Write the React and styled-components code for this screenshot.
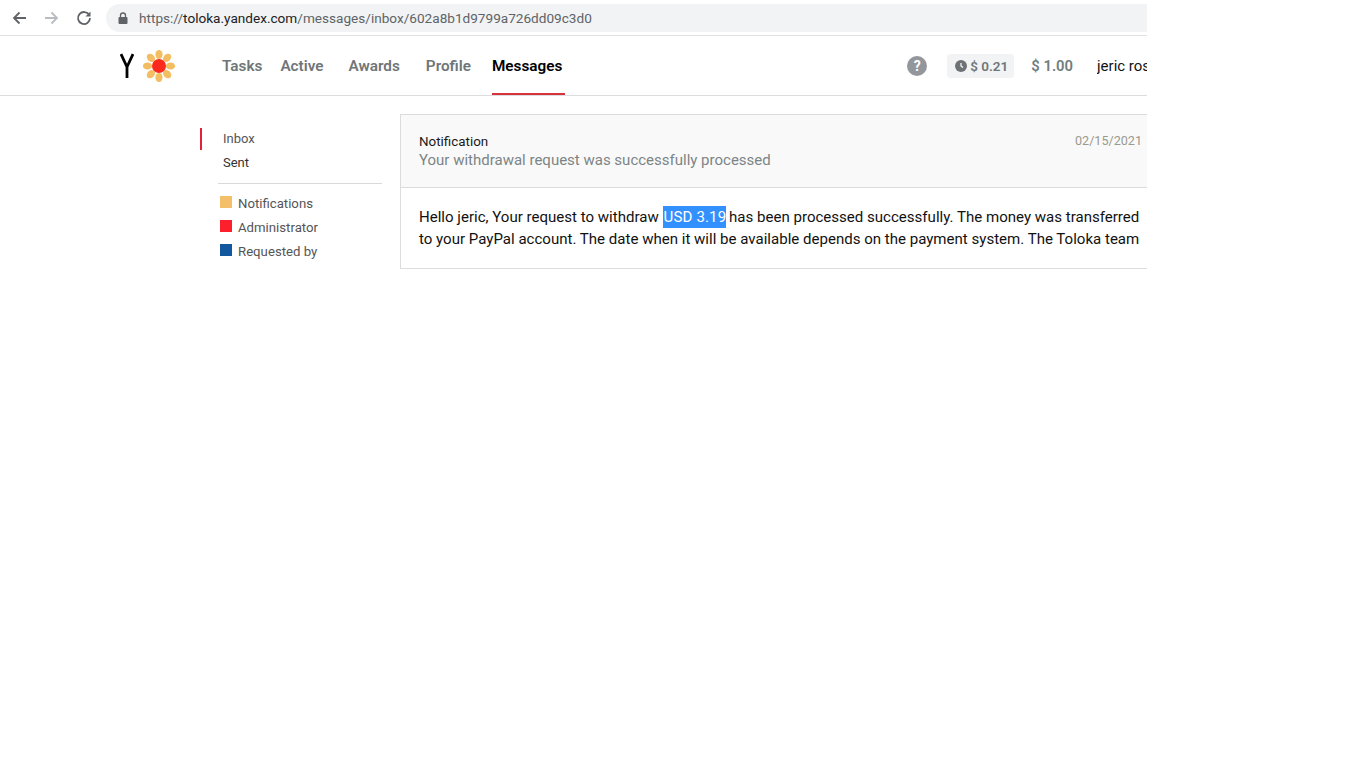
import React from 'react';
import styled, { createGlobalStyle } from 'styled-components';

const GlobalStyle = createGlobalStyle`
  html, body {
    margin: 0;
    padding: 0;
    background: #fff;
    font-family: 'Roboto', 'Liberation Sans', sans-serif;
  }
`;

const Frame = styled.div`
  width: 1147px;
  height: 768px;
  overflow: hidden;
`;

const BrowserBar = styled.div`
  display: flex;
  align-items: center;
  height: 36px;
  padding: 0 0 0 10px;
  box-sizing: border-box;
  border-bottom: 1px solid #dfe1e4;
`;

const ToolButton = styled.button`
  display: flex;
  align-items: center;
  justify-content: center;
  width: 18px;
  height: 18px;
  margin-right: ${(p) => p.$gap}px;
  padding: 0;
  border: none;
  background: none;
`;

const AddressPill = styled.div`
  display: flex;
  align-items: center;
  flex: 1;
  height: 28px;
  padding-left: 12px;
  background: #f1f3f4;
  border-radius: 14px 0 0 14px;
`;

const Url = styled.span`
  margin-left: 11px;
  font-size: 13.6px;
  color: #5f6368;
  white-space: nowrap;

  b {
    font-weight: 400;
    color: #202124;
  }
`;

const Header = styled.header`
  display: flex;
  align-items: stretch;
  height: 60px;
  box-sizing: border-box;
  padding-left: 120px;
  border-bottom: 1px solid #dcdcdc;
`;

const Logo = styled.div`
  display: flex;
  align-items: center;
  gap: 8px;
  width: 102px;
`;

const Nav = styled.nav`
  display: flex;
  align-items: stretch;
`;

const NavItem = styled.a`
  display: flex;
  align-items: center;
  box-sizing: border-box;
  margin-right: ${(p) => p.$gap}px;
  padding-top: 2px;
  padding-right: ${(p) => (p.$active ? '3px' : '0')};
  font-size: 15.3px;
  font-weight: 600;
  color: ${(p) => (p.$active ? '#000' : '#6f7678')};
  border-bottom: 2px solid ${(p) => (p.$active ? '#d8323c' : 'transparent')};
  white-space: nowrap;
`;

const Account = styled.div`
  display: flex;
  align-items: center;
  margin-left: auto;
  padding-top: 1px;
  white-space: nowrap;
`;

const HelpIcon = styled.span`
  display: flex;
  align-items: center;
  justify-content: center;
  width: 20px;
  height: 20px;
  margin-right: 20px;
  border-radius: 50%;
  background: #93969b;
  color: #fff;
  font-size: 14px;
  font-weight: 700;
`;

const PendingBadge = styled.div`
  display: flex;
  align-items: center;
  gap: 3px;
  height: 24px;
  padding: 0 6px 0 8px;
  margin-right: 17px;
  border-radius: 4px;
  background: #f1f3f4;
  font-size: 13.5px;
  font-weight: 600;
  color: #6f7678;
`;

const Balance = styled.span`
  margin-right: 24px;
  font-size: 14.8px;
  font-weight: 600;
  color: #6f7e82;
`;

const UserName = styled.span`
  width: 50px;
  overflow: hidden;
  font-size: 15px;
  color: #111;
`;

const Body = styled.main`
  display: flex;
  align-items: flex-start;
  padding: 18px 0 0 200px;
`;

const Sidebar = styled.aside`
  width: 182px;
  margin-right: 18px;
  padding-top: 14px;
`;

const Folders = styled.div`
  position: relative;
  padding-left: 23px;

  &::before {
    content: '';
    position: absolute;
    left: 0;
    top: 0;
    width: 2px;
    height: 22px;
    background: #e5203a;
  }
`;

const Folder = styled.div`
  height: 24px;
  line-height: 22px;
  font-size: 13px;
  color: ${(p) => (p.$active ? '#555' : '#333')};
`;

const Divider = styled.hr`
  height: 1px;
  margin: 7px 0 7px 18px;
  border: none;
  background: #d9d9d9;
`;

const Tag = styled.div`
  display: flex;
  align-items: center;
  height: 24px;
  margin-left: 20px;
  font-size: 13.2px;
  color: #555;
`;

const TagSwatch = styled.span`
  width: 12px;
  height: 12px;
  margin-right: 6px;
  margin-top: -3px;
  background: ${(p) => p.$color};
`;

const Card = styled.section`
  flex: 1;
  border: 1px solid #dcdcdc;
  border-right: none;
`;

const CardHead = styled.div`
  display: flex;
  justify-content: space-between;
  height: 73px;
  padding: 18px 5px 0 18px;
  box-sizing: border-box;
  background: #f9f9f9;
  border-bottom: 1px solid #dcdcdc;
`;

const Sender = styled.div`
  font-size: 13.4px;
  line-height: 17px;
  color: #1a1a1a;
`;

const Subject = styled.div`
  font-size: 15px;
  line-height: 20px;
  color: #7c8586;
`;

const DateText = styled.div`
  font-size: 12.6px;
  line-height: 16px;
  color: #9a9a8e;
`;

const Message = styled.div`
  height: 80px;
  padding: 18px 0 0 18px;
  box-sizing: border-box;
  font-size: 15.05px;
  line-height: 22px;
  color: #111;
  white-space: nowrap;

  mark {
    display: inline-block;
    margin: 0 -1px 0 1px;
    letter-spacing: 0.15px;
    background: #3390ff;
    color: #fff;
  }
`;

const YLetter = () => (
  <svg width="14" height="26" viewBox="0 0 14 26">
    <path d="M1 1 7 14v11M13 1 7 14" fill="none" stroke="#000" strokeWidth="2.800" />
  </svg>
);

const Flower = () => (
  <svg width="34" height="34" viewBox="0 0 34 34">
    {[0, 45, 90, 135, 180, 225, 270, 315].map((a) => (
      <ellipse key={a} cx="17" cy="5.500" rx="3.600" ry="4.600" fill="#f3bd62" transform={`rotate(${a} 17 17)`} />
    ))}
    <circle cx="17" cy="17" r="7" fill="#fc2a1d" />
  </svg>
);

const App = () => (
  <Frame>
    <GlobalStyle />
    <BrowserBar>
      <ToolButton $gap={15}>
        <svg width="16" height="16" viewBox="0 0 16 16"><path d="M15 8H3M8.500 2.500 3 8l5.500 5.500" fill="none" stroke="#5f6368" strokeWidth="1.800" /></svg>
      </ToolButton>
      <ToolButton $gap={14}>
        <svg width="16" height="16" viewBox="0 0 16 16"><path d="M1 8h12M7.500 2.500 13 8l-5.500 5.500" fill="none" stroke="#b9bcc0" strokeWidth="1.800" /></svg>
      </ToolButton>
      <ToolButton $gap={13}>
        <svg width="16" height="16" viewBox="0 0 16 16"><path d="M13.300 5.200A6 6 0 1 0 14 8" fill="none" stroke="#5f6368" strokeWidth="1.800" /><path d="M14.500 1.500v5h-5z" fill="#5f6368" /></svg>
      </ToolButton>
      <AddressPill>
        <svg width="10" height="12" viewBox="0 0 10 12"><path d="M2.500 5V3.500a2.500 2.500 0 0 1 5 0V5" fill="none" stroke="#5f6368" strokeWidth="1.300" /><rect x="0.500" y="5" width="9" height="7" rx="1" fill="#5f6368" /></svg>
        <Url>https://<b>toloka.yandex.com</b>/messages/inbox/602a8b1d9799a726dd09c3d0</Url>
      </AddressPill>
    </BrowserBar>
    <Header>
      <Logo>
        <YLetter />
        <Flower />
      </Logo>
      <Nav>
        <NavItem $gap={18}>Tasks</NavItem>
        <NavItem $gap={25}>Active</NavItem>
        <NavItem $gap={26}>Awards</NavItem>
        <NavItem $gap={21}>Profile</NavItem>
        <NavItem $active $gap={0}>Messages</NavItem>
      </Nav>
      <Account>
        <HelpIcon>?</HelpIcon>
        <PendingBadge>
          <svg width="12" height="12" viewBox="0 0 12 12"><circle cx="6" cy="6" r="6" fill="#6f7275" /><path d="M6 3v3l2 1.500" fill="none" stroke="#fff" strokeWidth="1.200" /></svg>
          $ 0.21
        </PendingBadge>
        <Balance>$ 1.00</Balance>
        <UserName>jeric rosi</UserName>
      </Account>
    </Header>
    <Body>
      <Sidebar>
        <Folders>
          <Folder $active>Inbox</Folder>
          <Folder>Sent</Folder>
        </Folders>
        <Divider />
        <Tag><TagSwatch $color="#f3c069" />Notifications</Tag>
        <Tag><TagSwatch $color="#fc1f2c" />Administrator</Tag>
        <Tag><TagSwatch $color="#12589f" />Requested by</Tag>
      </Sidebar>
      <Card>
        <CardHead>
          <div>
            <Sender>Notification</Sender>
            <Subject>Your withdrawal request was successfully processed</Subject>
          </div>
          <DateText>02/15/2021</DateText>
        </CardHead>
        <Message>
          Hello jeric, Your request to withdraw <mark>USD 3.19</mark> has been processed successfully. The money was transferred<br />
          to your PayPal account. The date when it will be available depends on the payment system. The Toloka team
        </Message>
      </Card>
    </Body>
  </Frame>
);

export default App;
